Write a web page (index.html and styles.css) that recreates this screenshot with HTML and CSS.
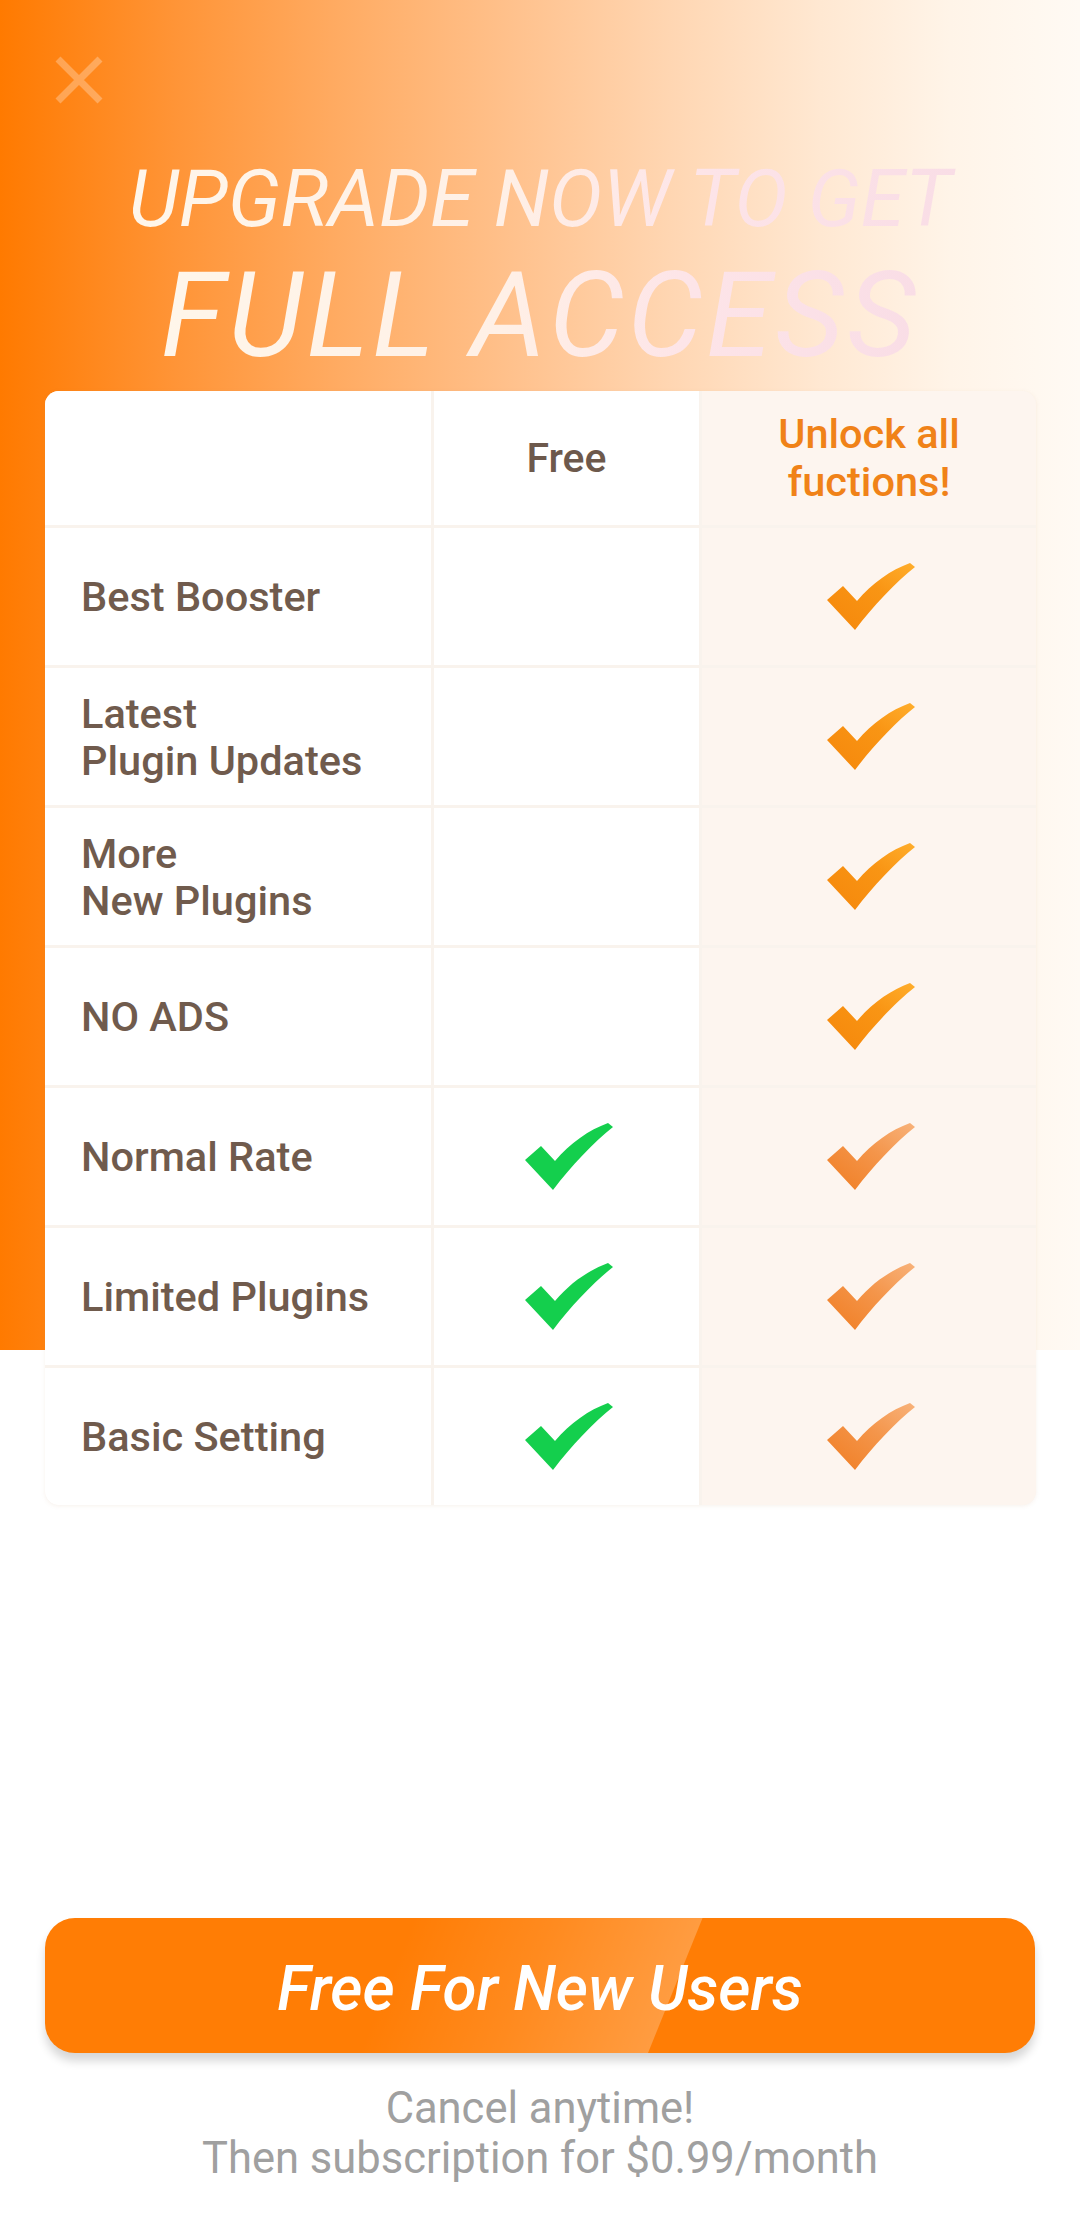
FILE: index.html
```html
<!DOCTYPE html>
<html lang="en">
<head>
<meta charset="utf-8">
<title>Upgrade</title>
<link rel="stylesheet" href="styles.css">
</head>
<body>
<svg class="defs" width="0" height="0" aria-hidden="true">
  <defs>
    <linearGradient id="gOrange" x1="0" y1="1" x2="1" y2="0">
      <stop offset="0" stop-color="#f5870b"/>
      <stop offset="0.6" stop-color="#f99514"/>
      <stop offset="1" stop-color="#ffae2c"/>
    </linearGradient>
    <linearGradient id="gSoft" x1="0" y1="1" x2="1" y2="0">
      <stop offset="0" stop-color="#f07d22"/>
      <stop offset="0.55" stop-color="#f4954a"/>
      <stop offset="1" stop-color="#f8b27a"/>
    </linearGradient>
    <symbol id="check" viewBox="0 0 90 68">
      <path d="M1 37 L17 23 L31 38 C46 20 65 7 84 0 L89 4 C70 19 47 43 29 67 Z"/>
    </symbol>
  </defs>
</svg>
<div class="page">
  <div class="topbar">
    <svg class="close" viewBox="0 0 48 48" width="48" height="48">
      <path d="M3 3 L45 45 M45 3 L3 45"/>
    </svg>
  </div>
  <h1 class="title">
    <span class="t1">UPGRADE NOW TO GET</span>
    <span class="t2">FULL ACCESS</span>
  </h1>

  <div class="card">
    <div class="cell head"></div>
    <div class="cell head c2"><span class="free">Free</span></div>
    <div class="cell head c3"><span class="unlock">Unlock all<br>fuctions!</span></div>

    <div class="cell label">Best Booster</div>
    <div class="cell c2"></div>
    <div class="cell c3"><svg class="chk o"><use href="#check"/></svg></div>

    <div class="cell label">Latest<br>Plugin Updates</div>
    <div class="cell c2"></div>
    <div class="cell c3"><svg class="chk o"><use href="#check"/></svg></div>

    <div class="cell label">More<br>New Plugins</div>
    <div class="cell c2"></div>
    <div class="cell c3"><svg class="chk o"><use href="#check"/></svg></div>

    <div class="cell label">NO ADS</div>
    <div class="cell c2"></div>
    <div class="cell c3"><svg class="chk o"><use href="#check"/></svg></div>

    <div class="cell label">Normal Rate</div>
    <div class="cell c2"><svg class="chk g"><use href="#check"/></svg></div>
    <div class="cell c3"><svg class="chk s"><use href="#check"/></svg></div>

    <div class="cell label">Limited Plugins</div>
    <div class="cell c2"><svg class="chk g"><use href="#check"/></svg></div>
    <div class="cell c3"><svg class="chk s"><use href="#check"/></svg></div>

    <div class="cell label">Basic Setting</div>
    <div class="cell c2"><svg class="chk g"><use href="#check"/></svg></div>
    <div class="cell c3"><svg class="chk s"><use href="#check"/></svg></div>
  </div>

  <div class="footer">
    <button class="cta"><span>Free For New Users</span></button>
    <p class="note">Cancel anytime!<br>Then subscription for $0.99/month</p>
  </div>
</div>
</body>
</html>
```
FILE: styles.css
```css
* { box-sizing: border-box; }
html, body {
  margin: 0;
  padding: 0;
  background: #ffffff;
}
body {
  font-family: Roboto, "Noto Sans", "Liberation Sans", sans-serif;
  width: 1080px;
  height: 2218px;
  overflow: hidden;
}
.defs { position: absolute; width: 0; height: 0; }

.page {
  width: 1080px;
  min-height: 2218px;
  background-color: #ffffff;
  background-image: linear-gradient(90deg,
    #ff7a00 0%,
    #ff9436 16%,
    #ffac64 32%,
    #ffc28e 48%,
    #ffd6b2 62%,
    #ffe8d2 76%,
    #fff4e8 88%,
    #fffaf4 100%);
  background-size: 100% 1350px;
  background-repeat: no-repeat;
  display: flex;
  flex-direction: column;
}

.topbar {
  height: 110px;
  padding: 56px 0 0 55px;
}
.close {
  display: block;
  fill: none;
  stroke: rgba(255, 255, 255, 0.28);
  stroke-width: 7;
}

.title {
  margin: 0;
  padding: 0;
  display: flex;
  flex-direction: column;
  align-items: center;
  font-style: italic;
  font-weight: 400;
}
.title span {
  display: block;
  background: linear-gradient(90deg, #fff6ea 0%, #fff0e6 45%, #fde4e8 70%, #f9dde6 100%);
  -webkit-background-clip: text;
  background-clip: text;
  color: transparent;
  white-space: nowrap;
  padding: 0 10px;
}
.t1 {
  font-size: 80px;
  line-height: 80px;
  margin-top: 49px;
  letter-spacing: 0;
}
.t2 {
  font-size: 119px;
  line-height: 120px;
  margin-top: 17px;
  letter-spacing: 3.5px;
}

.card {
  margin: 15px 44px 0 45px;
  width: 991px;
  display: grid;
  grid-template-columns: 386px 265px 334px;
  grid-template-rows: 134px repeat(7, 137px);
  gap: 3px;
  background: #f9f3ed;
  border-radius: 14px;
  overflow: hidden;
  box-shadow: 0 1px 4px rgba(190, 140, 100, 0.12);
}
.cell {
  background: #ffffff;
  display: flex;
  align-items: center;
}
.cell.c2 { justify-content: center; }
.cell.c3 {
  justify-content: center;
  background: #fdf5ef;
}
.label {
  padding-left: 36px;
  font-size: 41.5px;
  line-height: 47px;
  font-weight: 500;
  color: #705b4d;
}
.free {
  font-size: 41px;
  font-weight: 500;
  color: #6d594c;
}
.unlock {
  text-align: center;
  font-size: 41.5px;
  line-height: 48px;
  font-weight: 500;
  color: #f08218;
}

.chk {
  width: 90px;
  height: 68px;
}
.chk.o { fill: url(#gOrange); }
.chk.s { fill: url(#gSoft); }
.chk.g { fill: #14cf4d; }
.cell.c2 .chk { margin-left: 4px; }
.cell.c3 .chk { margin-left: 4px; }

.footer {
  margin-top: 413px;
  display: flex;
  flex-direction: column;
  align-items: center;
}
.cta {
  position: relative;
  width: 990px;
  height: 135px;
  border: none;
  border-radius: 30px;
  background: #ff7d05;
  box-shadow: 0 8px 10px rgba(0, 0, 0, 0.16);
  overflow: hidden;
  padding: 0;
  font-family: Roboto, "Noto Sans", "Liberation Sans", sans-serif;
  font-style: italic;
  font-weight: 500;
  font-size: 62px;
  color: #ffffff;
  cursor: pointer;
}
.cta::before {
  content: "";
  position: absolute;
  top: 0;
  bottom: 0;
  left: 0;
  width: 603px;
  transform: skewX(-22deg);
  transform-origin: bottom left;
  background: linear-gradient(90deg,
    rgba(255,255,255,0) 0%,
    rgba(255,255,255,0) 52%,
    rgba(255,255,255,0.1) 75%,
    rgba(255,255,255,0.24) 100%);
}
.cta span {
  position: relative;
  top: 3px;
}
.note {
  margin: 31px 0 0 0;
  text-align: center;
  font-size: 43.5px;
  line-height: 50px;
  color: #a0a0a0;
}
```
